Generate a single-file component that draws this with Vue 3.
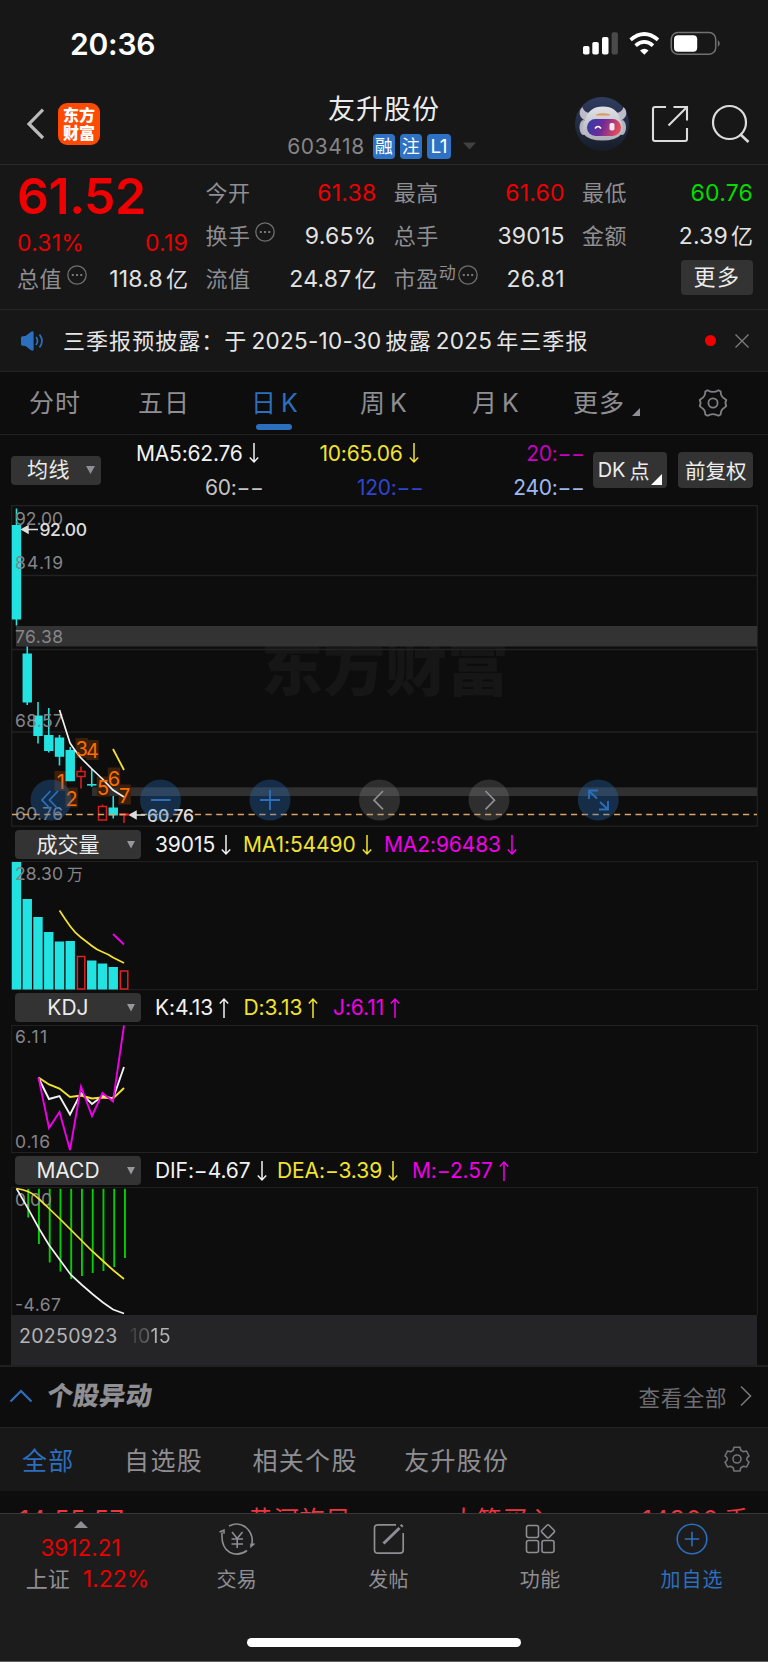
<script setup>
const quotes = [
  { label: '今开', value: '61.38', tone: 'up' },
  { label: '最高', value: '61.60', tone: 'up' },
  { label: '最低', value: '60.76', tone: 'down' },
  { label: '换手', value: '9.65%', info: true },
  { label: '总手', value: '39015' },
  { label: '金额', value: '2.39', unit: '亿' },
  { label: '流值', value: '24.87', unit: '亿' },
  { label: '市盈', sup: '动', value: '26.81', info: true },
  { more: true },
]

const averages = [
  { text: 'MA5:62.76', color: '#f2f2f2', arrow: true },
  { text: '10:65.06', color: '#f2e32f', arrow: true },
  { text: '20:−−', color: '#c800c0' },
  { text: '60:−−', color: '#c4c4c4' },
  { text: '120:−−', color: '#2f45d0' },
  { text: '240:−−', color: '#9db9f2' },
]

const step = 10.75
const cx = (i) => 16.5 + step * i

const gridLines = [575.5, 649.5, 732]
const priceLabels = [
  { t: '92.00', y: 525 },
  { t: '84.19', y: 568.5 },
  { t: '76.38', y: 643 },
  { t: '68.57', y: 726.5 },
  { t: '60.76', y: 819.5 },
]
const candles = [
  { hi: 508.5, top: 525, bot: 619.5, lo: 625.5 },
  { hi: 646.5, top: 653.5, bot: 702.5, lo: 705 },
  { hi: 702, top: 715.5, bot: 736, lo: 743.5 },
  { hi: 708, top: 735, bot: 751, lo: 752.5 },
  { hi: 735, top: 737.5, bot: 756.8, lo: 765.5 },
  { hi: 747, top: 750, bot: 781.2, lo: 781.2 },
  { hi: 766.5, top: 771.5, bot: 776.5, lo: 788.5, up: true },
  { hi: 768.5, top: 784, bot: 785.6, lo: 786.8 },
  { hi: 804.5, top: 806.5, bot: 820, lo: 820, up: true },
  { hi: 796, top: 807.5, bot: 815.5, lo: 818.5 },
  { hi: 814, top: 814, bot: 815, lo: 823, up: true },
]
const marks = [
  { n: 1, x: 60.7, y: 782.5 },
  { n: 2, x: 71.5, y: 799 },
  { n: 3, x: 81.7, y: 749.5 },
  { n: 4, x: 92.5, y: 751.5 },
  { n: 5, x: 103, y: 788 },
  { n: 6, x: 114, y: 779 },
  { n: 7, x: 124.7, y: 796 },
]
const volTops = [862, 899, 917, 932, 941.5, 941, 956.5, 960.5, 963.5, 967, 971]
const isUp = (i) => i === 6 || i === 10
const macdBars = [1217.5, 1244, 1262.5, 1271.5, 1279, 1276, 1273, 1271, 1267, 1258]

const volume = [
  { text: '39015', color: '#f2f2f2', w: 88 },
  { text: 'MA1:54490', color: '#f2e32f', w: 141 },
  { text: 'MA2:96483', color: '#f000e8', w: 141 },
]
const kdj = [
  { text: 'K:4.13', color: '#f2f2f2', w: 88.5 },
  { text: 'D:3.13', color: '#f2e32f', w: 89.5 },
  { text: 'J:6.11', color: '#f000e8', w: 89 },
]
const macd = [
  { text: 'DIF:−4.67', color: '#f2f2f2', dir: 'down', w: 122 },
  { text: 'DEA:−3.39', color: '#f2e32f', dir: 'down', w: 135 },
  { text: 'M:−2.57', color: '#f000e8', dir: 'up', w: 110 },
]
</script>

<template>
  <main class="app">
    <div class="status">
      <span class="clock">20:36</span>
      <svg class="sysicons" width="140" height="26" viewBox="0 0 140 26">
        <g fill="#fff">
          <rect x="1" y="16" width="6.5" height="8.5" rx="1.8" />
          <rect x="10.3" y="12" width="6.5" height="12.5" rx="1.8" />
          <rect x="20" y="7" width="6.5" height="17.5" rx="1.8" />
          <rect x="29.6" y="2.3" width="6.3" height="22.2" rx="1.8" fill="#4a4a4a" />
          <path d="M62.3 24.7l-4.3-4.3q4.3-3.5 8.6 0z" />
        </g>
        <g fill="none" stroke="#fff" stroke-width="3.7">
          <path d="M48.6 9.9q13.7-11.8 27.4 0" />
          <path d="M53.6 15.6q8.7-7.4 17.4 0" />
        </g>
        <rect x="89.3" y="2.6" width="44.4" height="21.6" rx="6.5" fill="none" stroke="#727272" stroke-width="1.5" />
        <rect x="92" y="5.3" width="23.2" height="16.4" rx="4" fill="#fff" />
        <path d="M135.8 10v7q4-3.5 0-7z" fill="#727272" />
      </svg>
    </div>

    <header class="head">
      <div class="side">
        <svg class="back" width="20" height="34" viewBox="0 0 20 34"><path d="M17 2.6L3 17l14 14" fill="none" stroke="#bababa" stroke-width="3.2" /></svg>
        <div class="logo"><span>东方</span><span>财富</span></div>
      </div>
      <div class="title">
        <h1>友升股份</h1>
        <div class="code">
          <span class="num">603418</span>
          <i class="tag">融</i><i class="tag">注</i><i class="tag l1">L1</i>
          <svg width="13" height="8" viewBox="0 0 13 8"><path d="M0 .5h13L6.5 7.5z" fill="#414141" /></svg>
        </div>
      </div>
      <div class="side actions">
        <svg width="54" height="54" viewBox="0 0 54 54">
          <defs>
            <linearGradient id="bg" x1="0" y1="0" x2="0" y2="1"><stop offset="0" stop-color="#2f3d60" /><stop offset="1" stop-color="#171c27" /></linearGradient>
            <linearGradient id="visor" x1="0" y1="0" x2="1" y2="0.2"><stop offset="0" stop-color="#2840a8" /><stop offset=".5" stop-color="#6d2a9a" /><stop offset="1" stop-color="#e04a5c" /></linearGradient>
            <linearGradient id="shell" x1="0" y1="0" x2="0" y2="1"><stop offset="0" stop-color="#e2e2e8" /><stop offset="1" stop-color="#aeadb8" /></linearGradient>
          </defs>
          <circle cx="27" cy="27" r="27" fill="url(#bg)" />
          <path d="M7.500 10q-4.500 4-2 9.500 2 3 5 4.500l5-8q-7-.5-8-6zM48.500 10q4.500 4 2 9.500-2 3-5 4.500l-5-8q7-.5 8-6z" fill="#bdbcc8" />
          <ellipse cx="8.500" cy="30.500" rx="4" ry="7.500" fill="#b4b3c0" /><ellipse cx="47" cy="30.500" rx="4" ry="7.500" fill="#b4b3c0" />
          <path d="M10.500 22Q14 9.500 28 9.500T45 22q5 9 1 15.500-5 6-18.500 6T9 37.500Q5 31 10.500 22z" fill="url(#shell)" />
          <path d="M21 17.500q6.500-2.500 14 0v1H21z" fill="#d99a5e" />
          <rect x="12" y="22" width="34" height="17" rx="8.500" fill="url(#visor)" />
          <path d="M20 31.500q3-4 6 0" fill="none" stroke="#fff" stroke-width="1.600" /><rect x="34.500" y="26" width="5" height="7.500" rx="1.800" fill="#f5e6ee" />
        </svg>
        <svg width="38" height="38" viewBox="0 0 38 38" fill="none" stroke="#dcdcdc" stroke-width="2.100">
          <path d="M15 2H4Q2 2 2 4v30q0 2 2 2h30q2 0 2-2V23M22.500 2H36v13.500M35.500 2.500L17.500 20.500" />
        </svg>
        <svg width="40" height="40" viewBox="0 0 40 40" fill="none" stroke="#dcdcdc" stroke-width="2.200">
          <circle cx="18.500" cy="18.500" r="16.500" /><path d="M29 30l8.500 8" stroke-width="2.600" />
        </svg>
      </div>
    </header>

    <section class="quote">
      <div class="lead">
        <strong>61.52</strong>
        <div class="chg"><span>0.31%</span><span>0.19</span></div>
        <div class="cell">
          <span class="lab">总值</span>
          <svg class="info" width="20" height="20" viewBox="0 0 20 20"><circle cx="10" cy="10" r="9.200" fill="none" stroke="#6f6f73" stroke-width="1.300" /><path d="M4.800 9h2v2h-2zM9 9h2v2H9zM13.200 9h2v2h-2z" fill="#77777b" /></svg>
          <span class="val">118.8<b>亿</b></span>
        </div>
      </div>
      <div class="cells">
        <div v-for="(q, i) in quotes" :key="i" class="cell" :class="{ end: q.more, pe: q.sup }">
          <template v-if="q.more"><button class="morebtn">更多</button></template>
          <template v-else>
            <span class="lab">{{ q.label }}</span><sup v-if="q.sup">{{ q.sup }}</sup>
            <svg v-if="q.info" class="info" width="20" height="20" viewBox="0 0 20 20"><circle cx="10" cy="10" r="9.200" fill="none" stroke="#6f6f73" stroke-width="1.300" /><path d="M4.800 9h2v2h-2zM9 9h2v2H9zM13.200 9h2v2h-2z" fill="#77777b" /></svg>
            <span class="val" :class="q.tone">{{ q.value }}<b v-if="q.unit">{{ q.unit }}</b></span>
          </template>
        </div>
      </div>
    </section>

    <section class="notice">
      <svg width="24" height="20" viewBox="0 0 24 20"><path d="M1 6.500Q1 5.500 2.500 5.200L5.500 5l5.500-4.200q2.600-1.300 2.600 1v16.400q0 2.300-2.600 1L5.500 15l-3-.2Q1 14.500 1 13.500z" fill="#2c6fbe" /><path d="M16 6q3 4 0 8M19.500 3.500q5 6.500 0 13" fill="none" stroke="#2c6fbe" stroke-width="1.700" /></svg>
      <p><span>三季报预披露：于</span><span class="n date">2025-10-30</span><span>披露</span><span class="n">2025</span><span>年三季报</span></p>
      <i class="dot"></i>
      <svg width="16" height="16" viewBox="0 0 16 16"><path d="M1.500 1.500l13 13m0-13l-13 13" stroke="#7d7d80" stroke-width="1.300" /></svg>
    </section>

    <nav class="periods">
      <span>分时</span><span>五日</span><span class="on">日<em>K</em></span><span>周<em>K</em></span><span>月<em>K</em></span>
      <span class="more">更多<svg width="8" height="8" viewBox="0 0 8 8"><path d="M8 0v8H0z" fill="#8e8e93" /></svg></span>
      <svg class="gear" width="30" height="30" viewBox="0 0 30 30" fill="none" stroke="#7f7f84" stroke-width="1.800" stroke-linejoin="round"><circle cx="15" cy="15" r="4.600" /><path d="M9.500 2.200Q15 5.600 20.500 2.200L22.700 3.500Q22.500 8.500 27 11L28.300 12Q26.500 15 28.300 18L27 19.200Q22.500 21.500 22.700 26.500L20.500 27.800Q15 24.400 9.500 27.800L7.300 26.500Q7.500 21.500 3 19.200L1.700 18Q3.500 15 1.700 12L3 11Q7.500 8.500 7.300 3.500z" /></svg>
    </nav>

    <section class="mabar">
      <button class="sel">均线<svg width="9" height="8" viewBox="0 0 9 8"><path d="M0 0h9L4.500 8z" fill="#8e8e93" /></svg></button>
      <div class="mas">
        <span v-for="a in averages" :key="a.text" :style="{ color: a.color }" :class="{ arr: a.arrow, none: !a.arrow }">{{ a.text }}<svg v-if="a.arrow" width="10" height="22" viewBox="0 0 10 22"><path d="M5 1v19M.8 15.500L5 20l4.200-4.500" fill="none" stroke="currentColor" stroke-width="1.500" /></svg></span>
      </div>
      <button class="dk">DK<u>点</u><svg width="11" height="11" viewBox="0 0 11 11"><path d="M11 0v11H0z" fill="#fff" /></svg></button>
      <button class="adj">前复权</button>
    </section>

    <svg class="plot" width="768" height="323" viewBox="0 504 768 323">
      <text class="mark" x="261" y="691" textLength="248" lengthAdjust="spacingAndGlyphs">东方财富</text>
      <g fill="none" stroke="#222224" stroke-width="1.300">
        <rect x="11.700" y="505.600" width="745.600" height="320.600" />
        <path v-for="y in gridLines" :key="y" :d="`M12 ${y}H757`" />
      </g>
      <rect x="16" y="626" width="741" height="20.500" fill="#333" />
      <rect x="92" y="787.300" width="665" height="8.700" fill="#303030" />
      <rect v-for="m in marks" :key="m.n" :x="m.x - 6.200" :y="m.y - 11.500" width="12.400" height="20" fill="#3c200a" />
      <g v-for="(c, i) in candles" :key="i">
        <path v-if="!c.up" :d="`M${cx(i)} ${c.hi}V${c.lo}`" stroke="#22e2e2" stroke-width="1.600" />
        <rect v-if="!c.up" :x="cx(i) - 4.700" :y="c.top" width="9.400" :height="c.bot - c.top" fill="#22e2e2" />
        <template v-else>
          <path :d="`M${cx(i)} ${c.hi}V${c.top}M${cx(i)} ${c.bot}V${c.lo}`" stroke="#d81e1e" stroke-width="1.600" />
          <rect :x="cx(i) - 4" :y="c.top" width="8" :height="c.bot - c.top" fill="none" stroke="#d81e1e" stroke-width="1.500" />
        </template>
      </g>
      <g class="axis">
        <text v-for="p in priceLabels" :key="p.t" x="15" :y="p.y" textLength="48">{{ p.t }}</text>
      </g>
      <path d="M59.500 710L70 743Q75 751 81 758L92 769 102.500 779 113 790 124 797" fill="none" stroke="#f2f2f2" stroke-width="1.700" />
      <path d="M113 749l11 21" stroke="#f2e32f" stroke-width="1.800" />
      <g class="nine"><text v-for="m in marks" :key="m.n" :x="m.x" :y="m.y + 6.500" text-anchor="middle">{{ m.n }}</text></g>
      <path d="M12 814.500H757" stroke="#dba569" stroke-width="1.600" stroke-dasharray="6.200 4.550" />
      <g class="tip">
        <path d="M24 529.500H38M22 529.500l6-3.500v7zM132 815H145M130 815l6-3.500v7z" stroke="#ddd" fill="#ddd" stroke-width="1.500" />
        <text x="39.500" y="536" textLength="47.500">92.00</text>
        <text x="147" y="821.500" textLength="47">60.76</text>
      </g>
      <g fill="#2870c0" fill-opacity=".33">
        <circle cx="51" cy="800" r="20.500" /><circle cx="160.500" cy="800" r="20.500" /><circle cx="270" cy="800" r="20.500" /><circle cx="598.300" cy="800" r="20.500" />
      </g>
      <g fill="#8e8e93" fill-opacity=".26"><circle cx="379.500" cy="800" r="20.500" /><circle cx="489" cy="800" r="20.500" /></g>
      <g fill="none" stroke="#2c6fbe" stroke-width="1.800">
        <path d="M50.500 791l-8.500 9 8.500 9M58 791l-8.500 9 8.500 9M151 800h19.500M260 800h20M270 790v20" />
        <path d="M597 798.500L589 791M589 799v-8.500h9M600 802l8 7.500M608 801v8.500h-9" />
      </g>
      <g fill="none" stroke="#8e8e93" stroke-width="1.700"><path d="M383 791l-9 9.200 9 9.200M485.500 791l9 9.200-9 9.200" /></g>
    </svg>

    <div class="ind">
      <button class="pick"><span>成交量</span><svg width="8" height="8" viewBox="0 0 8 8"><path d="M0 0h8L4 7.500z" fill="#98989c" /></svg></button>
      <span v-for="s in volume" :key="s.text" class="stat" :style="{ color: s.color, width: s.w + 'px' }">{{ s.text }}<svg width="10" height="22" viewBox="0 0 10 22"><path d="M5 1v19M.8 15.500L5 20l4.200-4.500" fill="none" stroke="currentColor" stroke-width="1.500" /></svg></span>
    </div>
    <svg class="plot" width="768" height="130" viewBox="0 861 768 130">
      <rect x="11.700" y="861.600" width="745.600" height="128" fill="none" stroke="#222224" />
      <template v-for="(t, i) in volTops" :key="i">
        <rect v-if="isUp(i)" :x="cx(i) - 3.600" :y="t" width="7.400" :height="989 - t" fill="none" stroke="#e02222" stroke-width="1.500" />
        <rect v-else :x="cx(i) - 4.700" :y="t" width="9.400" :height="989.500 - t" fill="#22e2e2" />
      </template>
      <path d="M59.500 910.500Q65 919 70 926T81 937.500 92 946 102.500 952 113 957.500L124 963" fill="none" stroke="#f2e32f" stroke-width="1.700" />
      <path d="M113 934l11 10.500" stroke="#f000e8" stroke-width="1.900" />
      <g class="axis"><text x="15" y="879.500" textLength="48">28.30</text><text class="cjk" x="67" y="879.500">万</text></g>
    </svg>

    <div class="ind last">
      <button class="pick"><span>KDJ</span><svg width="8" height="8" viewBox="0 0 8 8"><path d="M0 0h8L4 7.500z" fill="#98989c" /></svg></button>
      <span v-for="s in kdj" :key="s.text" class="stat" :style="{ color: s.color, width: s.w + 'px' }">{{ s.text }}<svg width="10" height="22" viewBox="0 0 10 22"><path d="M5 21V2M.8 6.500L5 2l4.200 4.500" fill="none" stroke="currentColor" stroke-width="1.500" /></svg></span>
    </div>
    <svg class="plot" width="768" height="130" viewBox="0 1024 768 130">
      <rect x="11.700" y="1025.500" width="745.600" height="127" fill="none" stroke="#222224" />
      <g fill="none" stroke-width="1.900">
        <path d="M38.500 1078L49 1099 59.500 1096 70 1114.500 81 1093 92 1104 102.500 1096 113 1098.500 124 1067" stroke="#f2f2f2" />
        <path d="M38.500 1077.500L49 1084.500 59.500 1088.500 70 1097 81 1095.500 92 1098.500 102 1097.500 113 1098.500 124 1088" stroke="#f2e32f" />
        <path d="M38.500 1077.500L49 1128 59.500 1112 70 1150 81 1086.500 92 1116 102.500 1093 113 1101.500 124 1025.500" stroke="#f000e8" />
      </g>
      <g class="axis"><text x="15" y="1042.700" textLength="32">6.11</text><text x="15" y="1148" textLength="35">0.16</text></g>
    </svg>

    <div class="ind last">
      <button class="pick"><span>MACD</span><svg width="8" height="8" viewBox="0 0 8 8"><path d="M0 0h8L4 7.500z" fill="#98989c" /></svg></button>
      <span v-for="s in macd" :key="s.text" class="stat" :style="{ color: s.color, width: s.w + 'px' }">{{ s.text }}<svg width="10" height="22" viewBox="0 0 10 22"><path :d="s.dir === 'up' ? 'M5 21V2M.8 6.500L5 2l4.200 4.500' : 'M5 1v19M.8 15.500L5 20l4.200-4.500'" fill="none" stroke="currentColor" stroke-width="1.500" /></svg></span>
    </div>
    <svg class="plot" width="768" height="128" viewBox="0 1187 768 128">
      <rect x="11.700" y="1187.600" width="745.600" height="128" fill="none" stroke="#222224" />
      <path v-for="(b, i) in macdBars" :key="i" :d="`M${28.2 + step * i} 1188.800V${b}`" stroke="#00cf00" stroke-width="1.900" />
      <g class="axis"><text x="15" y="1205.500" textLength="37">0.00</text><text x="15" y="1311" textLength="46">-4.67</text></g>
      <path d="M16.500 1188.500L28 1208.500 39 1228.500 49 1245 60 1260 71 1275 82 1285 93 1294.500 103 1302.500 113 1309.500 124 1313.500" fill="none" stroke="#f2f2f2" stroke-width="1.700" />
      <path d="M16.500 1188.500Q23 1189.500 28 1191.500T39 1199L49 1208.500 60 1219 71 1230 92 1251 103 1261 113 1270 124 1279" fill="none" stroke="#f2e32f" stroke-width="1.700" />
    </svg>
    <div class="dates"><span>20250923</span><span class="fade">1015</span></div>

    <section class="moves">
      <svg width="24" height="14" viewBox="0 0 24 14"><path d="M1.500 12.500L12 2l10.500 10.500" fill="none" stroke="#2c6fbe" stroke-width="2.200" /></svg>
      <h2>个股异动</h2>
      <span class="all">查看全部</span>
      <svg width="12" height="22" viewBox="0 0 12 22"><path d="M1 1.500L10.500 11 1 20.500" fill="none" stroke="#77777b" stroke-width="1.600" /></svg>
    </section>

    <nav class="scopes">
      <span class="on">全部</span><span>自选股</span><span>相关个股</span><span>友升股份</span>
      <svg width="26" height="26" viewBox="0 0 26 26" fill="none" stroke="#737377" stroke-width="1.600"><circle cx="13" cy="13" r="4" /><path d="M10 1.200h6L16.800 4.300 19.500 5.800 22.500 5 25 10Q22.700 11.500 22.700 13T25 16.200L22.500 21 19.500 20.300 16.800 21.800 16 25h-6L9.200 21.800 6.500 20.300 3.500 21 1 16.200Q3.300 14.800 3.300 13T1 10L3.500 5 6.500 5.800 9.200 4.300z" stroke-linejoin="round" /></svg>
    </nav>

    <div class="ticker"><span class="time">14:55:57</span><span>黄河旋风</span><span>大笔买入</span><span class="lots">14300<b>手</b></span></div>

    <footer class="dock">
      <div class="index">
        <svg width="14" height="7" viewBox="0 0 14 7"><path d="M7 0l7 7H0z" fill="#8e8e93" /></svg>
        <div class="pt">3912.21</div>
        <div class="pc"><span>上证</span>1.22%</div>
      </div>
      <div class="item">
        <svg width="38" height="34" viewBox="0 0 38 34" fill="none" stroke="#8e8e93" stroke-width="1.600"><path d="M11 4Q20-.5 27.500 5 36.500 12.500 33.500 24M29 28.500Q21 34.500 12 30.500 3 25.500 4 10.500M1.500 10l4.500-1.800v3.500M36.500 21.500L33 24.500v-3" /><path d="M14 10l5.200 6.500L24.500 10M13.500 17h11.500M13.500 22h11.500M19.200 16.500V26" /></svg>
        <span>交易</span>
      </div>
      <div class="item">
        <svg width="34" height="34" viewBox="0 0 34 34" fill="none" stroke="#8e8e93" stroke-width="1.700"><path d="M24 2.800H6Q2.500 2.800 2.500 6v22q0 3.200 3.500 3.200h22q3.200 0 3.200-3.200V11" /><path d="M11.500 21.500L27.500 6M29 4.500l1.500-1.500" stroke-width="3" /></svg>
        <span>发帖</span>
      </div>
      <div class="item">
        <svg width="34" height="34" viewBox="0 0 34 34" fill="none" stroke="#8e8e93" stroke-width="1.600"><rect x="3.500" y="3.500" width="12" height="12" rx="2" /><rect x="3.500" y="18.500" width="12" height="12" rx="2" /><rect x="19" y="18.500" width="12" height="12" rx="2" /><rect x="20" y="4.300" width="10" height="10" rx="1.500" transform="rotate(45 25 9.300)" /></svg>
        <span>功能</span>
      </div>
      <div class="item add">
        <svg width="34" height="34" viewBox="0 0 34 34" fill="none" stroke="#2c6fbe" stroke-width="1.600"><circle cx="17" cy="17" r="14.800" /><path d="M9.800 17h14.400M17 9.800v14.400" /></svg>
        <span>加自选</span>
      </div>
    </footer>
    <div class="home"><i></i></div>
  </main>
</template>

<style>
html, body { background: #0c0c0c; }
</style>

<style scoped>
.app { width: 768px; height: 1662px; overflow: hidden; display: flex; flex-direction: column; background: #0d0d0d; color: #e2e2e2; font-family: Inter, "Noto Sans CJK SC", sans-serif; font-size: 23px; font-weight: 385; }
.app > * { flex: none; box-sizing: border-box; }
svg { display: block; flex: none; }
button { border: 0; padding: 0; margin: 0; background: #333; color: #ececec; font: inherit; border-radius: 4px; display: flex; align-items: center; justify-content: center; }
i, em { font-style: normal; }
b { font-weight: inherit; }
u { text-decoration: none; }

.status { height: 84px; background: #171717; display: flex; justify-content: space-between; padding: 30px 46px 0 70px; }
.clock { font-size: 30px; font-weight: 600; line-height: 28px; color: #fff; letter-spacing: -.2px; }

.head { height: 81px; background: #171717; border-bottom: 1px solid #2a2a2a; display: flex; justify-content: space-between; }
.side { width: 200px; display: flex; align-items: center; }
.back { margin-left: 26px; }
.logo { margin-left: 12px; width: 42px; height: 42px; border-radius: 9px; background: #ff4a03; color: #fff; font-weight: 900; font-size: 16px; line-height: 18px; display: flex; flex-direction: column; align-items: center; justify-content: center; }
.title { display: flex; flex-direction: column; align-items: center; padding-left: 17px; }
h1 { margin: 9px 0 0; font-size: 27px; letter-spacing: 1px; font-weight: 385; line-height: 34px; color: #ececec; }
.code { display: flex; align-items: center; height: 26px; margin-top: 6px; margin-right: 5px; }
.num { font-size: 21px; color: #85858a; margin-right: 8px; letter-spacing: .6px; }
.tag { width: 22px; height: 25px; border-radius: 4px; background: #2d72c4; color: #fff; font-size: 18px; line-height: 25px; text-align: center; margin-right: 5px; }
.tag.l1 { width: 24px; margin-right: 12px; font-size: 19px; letter-spacing: -.5px; }
.actions { justify-content: flex-end; padding-right: 17px; width: 200px; }
.actions svg:nth-child(2) { margin-left: 22px; }
.actions svg:nth-child(3) { margin-left: 22px; }

.quote { height: 145px; background: #171717; border-bottom: 1px solid #242424; display: flex; padding: 7px 15px 0 17px; }
.lead { width: 171px; margin-right: 17.500px; }
.lead strong { display: block; font-size: 50px; font-weight: 600; line-height: 48px; color: #f00000; letter-spacing: -.5px; }
.chg { display: flex; justify-content: space-between; color: #ea0000; line-height: 32px; margin-top: 7px; margin-bottom: -1px; letter-spacing: .2px; }
.cells { flex: 1; display: grid; grid-template-columns: 171px 171px 171px; column-gap: 17.300px; grid-auto-rows: 43.200px; }
.cell { display: flex; align-items: center; height: 43.200px; line-height: 43px; }
.lab { font-size: 22px; letter-spacing: .5px; color: #8e8e93; }
.val { margin-left: auto; letter-spacing: .2px; }
.val b { font-size: 22px; margin-left: 3px; letter-spacing: 0; }
.up { color: #ee0000; }
.down { color: #00dc00; }
.info { margin: 0 0 9px 5px; }
.pe .info { margin-left: 2px; }
sup { font-size: 17px; line-height: 20px; color: #8e8e93; margin: 0 0 14px 0; }
.end { justify-content: flex-end; }
.morebtn { width: 72px; height: 35px; font-size: 22px; letter-spacing: 1.500px; margin-bottom: 4px; }

.notice { height: 62px; background: #171717; border-bottom: 1px solid #242424; display: flex; align-items: center; padding: 0 18px 0 20px; }
.notice p { margin: 0 auto 0 19px; display: flex; font-size: 22px; letter-spacing: 1.050px; line-height: 40px; color: #e6e6e6; }
.notice .n { letter-spacing: .3px; margin: 0 4px 0 4px; font-size: 22.500px; }
.dot { width: 11px; height: 11px; border-radius: 50%; background: #f00000; margin-right: 18px; }

.periods { height: 63px; border-bottom: 1px solid #202020; display: flex; padding-left: 29px; font-size: 25px; letter-spacing: 1px; color: #8e8e93; line-height: 62px; }
.periods em { margin-left: 4px; letter-spacing: 0; }
.periods > span { position: relative; width: 109px; }
.periods > span:nth-child(2) { width: 113px; }
.periods > span:nth-child(3) { width: 109px; }
.periods > span:nth-child(4) { width: 112px; }
.periods > span:nth-child(5) { width: 101px; }
.periods .on { color: #2c6fbe; }
.periods .on::after { content: ""; position: absolute; left: 5px; bottom: 4px; width: 36px; height: 6px; border-radius: 3px; background: #2c6fbe; }
.periods .more { width: 125px; display: flex; align-items: center; }
.more svg { margin: 18px 0 0 7px; }
.gear { margin-top: 16px; }

.mabar { height: 69px; display: flex; align-items: center; padding: 1px 15px 0 11px; font-size: 21px; }
.sel { width: 90px; height: 29px; font-size: 21px; letter-spacing: .5px; justify-content: flex-start; padding-left: 16px; line-height: 27px; align-items: flex-start; }
.sel svg { margin: 10px 0 0 16px; }
.mas { width: 483px; display: grid; grid-template-columns: 163px 160px 161px; }
.mas span { display: flex; align-items: center; justify-content: flex-end; height: 34px; }
.mas .none { letter-spacing: -.3px; }
.mas .arr { padding-right: 5px; letter-spacing: -.2px; }
.mas svg { margin-left: 6px; }
.dk { width: 75px; height: 36px; margin-left: 9px; font-size: 20px; justify-content: flex-start; padding-left: 5px; }
.dk u { margin-left: 4px; }
.dk svg { margin: 18px 0 0 1px; }
.adj { width: 75px; height: 36px; margin-left: 11px; font-size: 20.500px; }

.mark { font-size: 62px; font-weight: 900; fill: #161616; }
.axis text { font-size: 17.500px; fill: #858589; }
.axis .cjk { font-size: 16px; }
.nine text { font-size: 20px; fill: #fb6d05; }
.tip text { font-size: 17.500px; fill: #dedede; font-weight: 500; }

.ind { height: 34px; display: flex; align-items: center; padding: 1px 0 0 15px; font-size: 21px; }
.ind.last { height: 33px; padding-top: 0; }
.pick { width: 126px; height: 29px; font-size: 21px; margin-right: 14px; justify-content: flex-start; line-height: 28px; }
.pick span { width: 106px; text-align: center; }
.pick svg { margin-left: 6px; }
.stat { display: flex; align-items: center; letter-spacing: -.1px; }
.stat svg { margin-left: 6px; }

.dates { height: 50px; margin: 0 11px; background: #252527; padding: 3px 8px 0; font-size: 19.500px; letter-spacing: .3px; line-height: 36px; color: #b4b4b6; display: flex; }
.dates .fade { height: 36px; margin-left: 12px; background: linear-gradient(90deg, #38383a 0%, #6a6a6c 48%, #b4b4b6 52%); -webkit-background-clip: text; background-clip: text; color: transparent; }

.moves { height: 63px; border-top: 2px solid #202021; border-bottom: 1px solid #242424; display: flex; align-items: center; padding: 0 16px 2px 9px; }
h2 { margin: 0 auto 0 14px; font-size: 26px; font-weight: 900; letter-spacing: .3px; color: #8e8e93; line-height: 40px; transform: skewX(-8deg); }
.all { font-size: 21.500px; color: #6e6e72; letter-spacing: .6px; margin-right: 13px; }

.scopes { height: 63px; background: #181818; display: flex; align-items: center; padding: 0 18px 2px 22px; font-size: 25px; letter-spacing: 1.300px; color: #8e8e93; }
.scopes span { margin-right: 49.500px; }
.scopes span:nth-child(3) { margin-right: 46.500px; }
.scopes .on { color: #2c6fbe; }
.scopes svg { margin-left: auto; }

.ticker { height: 22px; overflow: hidden; display: grid; grid-template-columns: 229px 203px 1fr auto; padding: 12px 19px 0; font-size: 25px; letter-spacing: .8px; line-height: 34px; color: #f03440; }
.ticker .time { letter-spacing: .6px; }
.ticker b { margin-left: 5px; letter-spacing: 0; }

.dock { height: 107px; background: #1c1c1c; border-top: 1px solid #383838; display: flex; }
.index { width: 161px; display: flex; flex-direction: column; align-items: center; padding-top: 7px; color: #ea0000; line-height: 31px; font-size: 23px; }
.pt { margin-top: 4px; font-size: 22.500px; }
.pc { padding-left: 14px; margin-top: 1px; }
.pc span { color: #8e8e93; font-size: 22px; margin-right: 13px; }
.item { width: 151.700px; display: flex; flex-direction: column; align-items: center; padding-top: 8px; font-size: 20px; letter-spacing: .4px; color: #8e8e93; }
.item span { line-height: 32px; margin-top: 8px; }
.add { color: #2c6fbe; letter-spacing: 1px; }
.home { flex: 1 !important; background: #1c1c1c; border-bottom: 1px solid #606060; display: flex; justify-content: center; }
.home i { width: 274px; height: 9px; border-radius: 5px; background: #fff; margin-top: 18px; }
</style>
